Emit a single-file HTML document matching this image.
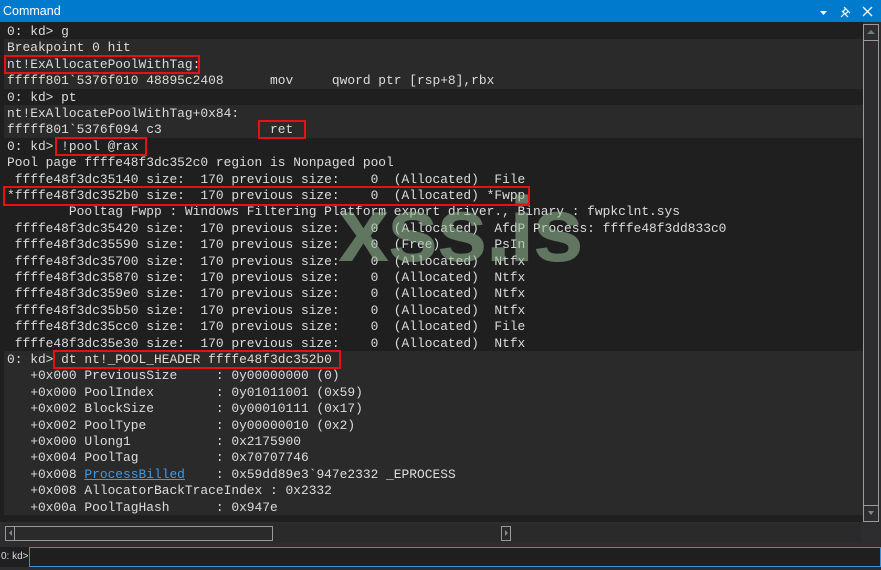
<!DOCTYPE html>
<html><head><meta charset="utf-8"><style>
*{margin:0;padding:0;box-sizing:border-box}
body{width:881px;height:570px;background:#2d2d30;position:relative;overflow:hidden;font-family:"Liberation Mono",monospace;}
#title{position:absolute;left:0;top:0;width:881px;height:22px;background:#007acc;color:#fff;font-family:"Liberation Sans",sans-serif;font-size:12.5px;line-height:22px;padding-left:3px}
#area{position:absolute;left:0;top:22px;width:863px;height:500px;background:#1f1f1f}
.r{position:absolute;left:4px;width:859px;height:16.4px;line-height:18.5px;font-size:12.9px;color:#dcdcdc;white-space:pre;padding-left:3px;overflow:hidden}
.d{background:#1f1f1f}.l{background:#2a2a2a}
.box{position:absolute;border:2px solid #e81010}
a{color:#3f9ae6;text-decoration:underline}
</style></head><body>
<div id="title">Command</div>
<svg style="position:absolute;left:815px;top:4px" width="60" height="14">
<polygon points="5,7 12,7 8.5,11" fill="#fff"/>
<path d="M26 13 L30 9 M29 3 L35 9 M31 4 L28 8 L30 10 L34 7 M27 7 L33 13" stroke="#fff" stroke-width="1.2" fill="none"/>
<path d="M48 3 L57 12 M57 3 L48 12" stroke="#fff" stroke-width="1.3"/>
</svg>
<div id="area"></div>
<div class="r d" style="top:23px">0: kd&gt; g</div>
<div class="r l" style="top:39.4px">Breakpoint 0 hit</div>
<div class="r l" style="top:55.8px">nt!ExAllocatePoolWithTag:</div>
<div class="r l" style="top:72.2px">fffff801`5376f010 48895c2408      mov     qword ptr [rsp+8],rbx</div>
<div class="r d" style="top:88.6px">0: kd&gt; pt</div>
<div class="r l" style="top:105px">nt!ExAllocatePoolWithTag+0x84:</div>
<div class="r l" style="top:121.4px">fffff801`5376f094 c3              ret</div>
<div class="r d" style="top:137.8px">0: kd&gt; !pool @rax</div>
<div class="r d" style="top:154.2px">Pool page ffffe48f3dc352c0 region is Nonpaged pool</div>
<div class="r d" style="top:170.6px"> ffffe48f3dc35140 size:  170 previous size:    0  (Allocated)  File</div>
<div class="r d" style="top:187px">*ffffe48f3dc352b0 size:  170 previous size:    0  (Allocated) *Fwpp</div>
<div class="r d" style="top:203.4px">        Pooltag Fwpp : Windows Filtering Platform export driver., Binary : fwpkclnt.sys</div>
<div class="r d" style="top:219.8px"> ffffe48f3dc35420 size:  170 previous size:    0  (Allocated)  AfdP Process: ffffe48f3dd833c0</div>
<div class="r d" style="top:236.2px"> ffffe48f3dc35590 size:  170 previous size:    0  (Free)       PsIn</div>
<div class="r d" style="top:252.6px"> ffffe48f3dc35700 size:  170 previous size:    0  (Allocated)  Ntfx</div>
<div class="r d" style="top:269px"> ffffe48f3dc35870 size:  170 previous size:    0  (Allocated)  Ntfx</div>
<div class="r d" style="top:285.4px"> ffffe48f3dc359e0 size:  170 previous size:    0  (Allocated)  Ntfx</div>
<div class="r d" style="top:301.8px"> ffffe48f3dc35b50 size:  170 previous size:    0  (Allocated)  Ntfx</div>
<div class="r d" style="top:318.2px"> ffffe48f3dc35cc0 size:  170 previous size:    0  (Allocated)  File</div>
<div class="r d" style="top:334.6px"> ffffe48f3dc35e30 size:  170 previous size:    0  (Allocated)  Ntfx</div>
<div class="r l" style="top:351px">0: kd&gt; dt nt!_POOL_HEADER ffffe48f3dc352b0</div>
<div class="r l" style="top:367.4px">   +0x000 PreviousSize     : 0y00000000 (0)</div>
<div class="r l" style="top:383.8px">   +0x000 PoolIndex        : 0y01011001 (0x59)</div>
<div class="r l" style="top:400.2px">   +0x002 BlockSize        : 0y00010111 (0x17)</div>
<div class="r l" style="top:416.6px">   +0x002 PoolType         : 0y00000010 (0x2)</div>
<div class="r l" style="top:433px">   +0x000 Ulong1           : 0x2175900</div>
<div class="r l" style="top:449.4px">   +0x004 PoolTag          : 0x70707746</div>
<div class="r l" style="top:465.8px">   +0x008 <a>ProcessBilled</a>    : 0x59dd89e3`947e2332 _EPROCESS</div>
<div class="r l" style="top:482.2px">   +0x008 AllocatorBackTraceIndex : 0x2332</div>
<div class="r l" style="top:498.6px">   +0x00a PoolTagHash      : 0x947e</div>
<div style="position:absolute;left:338px;top:180px;font-family:'Liberation Sans',sans-serif;font-weight:bold;font-size:92px;color:rgba(150,190,150,0.55);letter-spacing:-2px;line-height:100px">xss.is</div>
<div class="box" style="left:4px;top:55px;width:196px;height:19px"></div>
<div class="box" style="left:258px;top:120px;width:48px;height:19px"></div>
<div class="box" style="left:55px;top:137px;width:92px;height:19px"></div>
<div class="box" style="left:3px;top:186px;width:527px;height:20px"></div>
<div class="box" style="left:53px;top:350px;width:288px;height:19px"></div>
<div style="position:absolute;left:863px;top:22px;width:18px;height:500px;background:#2d2d30"></div>
<div style="position:absolute;left:863px;top:24px;width:16px;height:17px;border:1px solid #9a9a9a"></div>
<div style="position:absolute;left:863px;top:41px;width:16px;height:464px;border:1px solid #9a9a9a;border-top:none;border-bottom:none"></div>
<div style="position:absolute;left:867px;top:30px;width:0;height:0;border-left:4px solid transparent;border-right:4px solid transparent;border-bottom:4px solid #6f7f6f"></div>
<div style="position:absolute;left:863px;top:505px;width:16px;height:17px;border:1px solid #9a9a9a"></div>
<div style="position:absolute;left:868px;top:511px;width:0;height:0;border-left:3px solid transparent;border-right:3px solid transparent;border-top:4px solid #888"></div>
<div style="position:absolute;left:4px;top:524px;width:857px;height:18px;background:#2a2a2a"></div>
<div style="position:absolute;left:5px;top:526px;width:268px;height:15px;border:1px solid #9a9a9a"></div>
<div style="position:absolute;left:5px;top:526px;width:10px;height:15px;border-right:1px solid #9a9a9a"></div>
<div style="position:absolute;left:9px;top:530px;width:0;height:0;border-top:3px solid transparent;border-bottom:3px solid transparent;border-right:3px solid #888"></div>
<div style="position:absolute;left:501px;top:526px;width:10px;height:15px;border:1px solid #9a9a9a"></div>
<div style="position:absolute;left:505px;top:530px;width:0;height:0;border-top:3px solid transparent;border-bottom:3px solid transparent;border-left:3px solid #888"></div>
<div style="position:absolute;left:0;top:547px;width:30px;height:20px;background:#1f1f1f;color:#dcdcdc;font-family:'Liberation Sans',sans-serif;font-size:10px;line-height:19px;padding-left:1px;white-space:pre;overflow:hidden">0: kd&gt;</div>
<div style="position:absolute;left:29px;top:547px;width:852px;height:20px;background:#1f1f1f;border:1px solid #3c8fd8"></div>
</body></html>
